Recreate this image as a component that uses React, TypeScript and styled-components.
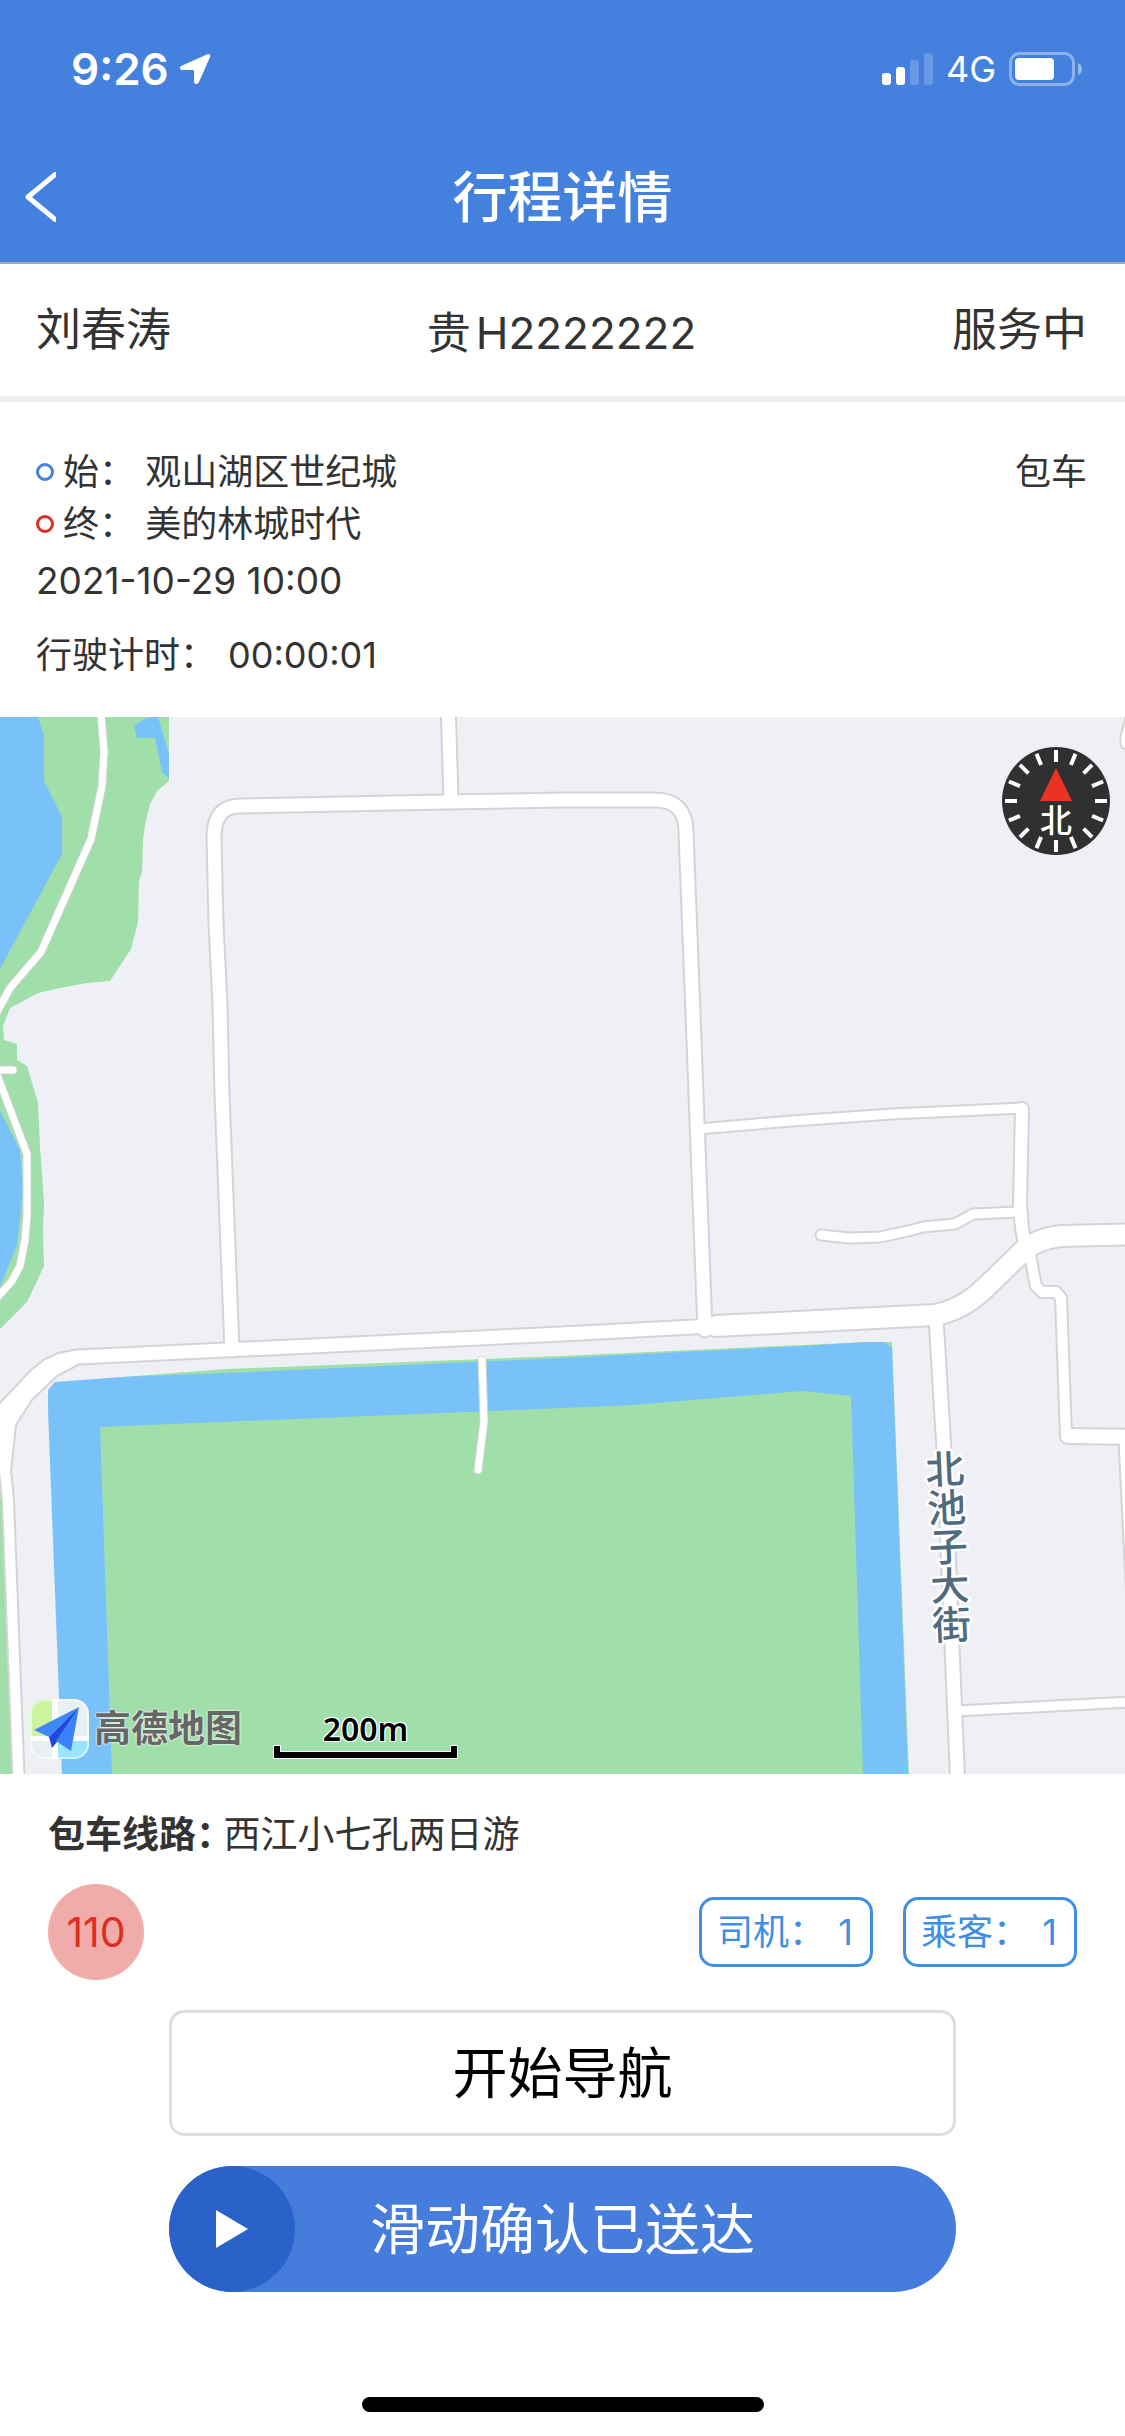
import React, { useState } from 'react';
import styled, { createGlobalStyle } from 'styled-components';

const GlobalStyle = createGlobalStyle`
  *, *::before, *::after { box-sizing: border-box; }
  body {
    margin: 0;
    background: #ffffff;
    color: #333333;
    font-family: Inter, "Noto Sans CJK SC", sans-serif;
  }
  button, input { font: inherit; }
`;

const Page = styled.div`
  display: flex;
  flex-direction: column;
  min-height: 100vh;
`;

const Header = styled.header`
  background: #4480de;
  border-bottom: 2px solid #a8a8ab;
  color: #ffffff;
`;

const StatusBar = styled.div`
  display: flex;
  align-items: center;
  justify-content: space-between;
  height: 132px;
  padding: 6px 42px 0 71px;
`;

const StatusGroup = styled.div<{ $gap: number }>`
  display: flex;
  align-items: center;
  gap: ${(p) => p.$gap}px;
`;

const Clock = styled.span`
  font-size: 44px;
  font-weight: 600;
  line-height: 48px;
`;

const Network = styled.span`
  font-size: 36px;
  line-height: 48px;
`;

const NavBar = styled.div`
  display: grid;
  grid-template-columns: 120px 1fr 120px;
  align-items: center;
  height: 130px;
`;

const BackButton = styled.button`
  display: flex;
  align-items: center;
  height: 96px;
  padding: 0 0 0 24px;
  border: 0;
  background: none;
  color: inherit;
`;

const Title = styled.h1`
  margin: 0;
  font-size: 55px;
  font-weight: 500;
  line-height: 72px;
  text-align: center;
`;

const Summary = styled.section`
  display: grid;
  grid-template-columns: 1fr auto 1fr;
  align-items: center;
  height: 138px;
  padding: 0 38px 0 36px;
  border-bottom: 6px solid #f0f0f0;
  font-size: 45px;
  line-height: 60px;
`;

const Plate = styled.span`
  display: flex;
  gap: 5px;
  padding-top: 6px;
  font-size: 44px;
`;

const Status = styled.span`
  text-align: right;
`;

const Details = styled.section`
  display: flex;
  justify-content: space-between;
  padding: 44px 38px 36px 36px;
  font-size: 36px;
  line-height: 52px;
`;

const DetailList = styled.div`
  display: flex;
  flex-direction: column;
`;

const Stop = styled.div<{ $color: string }>`
  display: flex;
  align-items: center;
  gap: 9px;
  &::before {
    content: '';
    width: 18px;
    height: 18px;
    border: 3px solid ${(p) => p.$color};
    border-radius: 50%;
  }
`;

const Moment = styled.time`
  margin-top: 5px;
  font-size: 37px;
`;

const Timer = styled.div`
  display: flex;
  gap: 12px;
  margin-top: 22px;
`;

const MapArea = styled.section`
  position: relative;
  flex: 1 0 600px;
  overflow: hidden;
  background: #eef0f5;
`;

const MapCanvas = styled.svg`
  position: absolute;
  inset: 0;
  width: 100%;
  height: 100%;
`;

const StreetName = styled.text`
  font-family: "Noto Sans CJK SC", sans-serif;
  font-size: 39px;
  font-weight: 500;
  writing-mode: vertical-rl;
  fill: #4f6b7d;
  stroke: #ffffff;
  stroke-width: 5px;
  stroke-linejoin: round;
  paint-order: stroke;
`;

const Compass = styled.button`
  position: absolute;
  top: 30px;
  right: 15px;
  padding: 0;
  border: 0;
  border-radius: 50%;
  background: none;
  svg { display: block; }
`;

const CompassLabel = styled.text`
  font-family: "Noto Sans CJK SC", sans-serif;
  font-size: 32px;
  font-weight: 500;
  fill: #ffffff;
`;

const MapFooter = styled.div`
  position: absolute;
  left: 30px;
  bottom: 15px;
  display: flex;
  align-items: flex-end;
  gap: 31px;
`;

const Brand = styled.div`
  display: flex;
  align-items: center;
  gap: 5px;
  color: #666666;
  font-size: 37px;
  font-weight: 700;
  line-height: 60px;
  text-shadow: 0 0 2px #ffffff, 0 0 2px #ffffff;
`;

const Scale = styled.div`
  display: flex;
  flex-direction: column;
  align-items: center;
  width: 185px;
  color: #000000;
  font-family: "Noto Sans", sans-serif;
  font-size: 32px;
  font-weight: 600;
  line-height: 32px;
  text-shadow: 1px 1px 0 #ffffff, -1px -1px 0 #ffffff, 1px -1px 0 #ffffff, -1px 1px 0 #ffffff;
`;

const Trip = styled.section`
  padding: 35px 48px 30px;
`;

const Route = styled.div`
  display: flex;
  gap: 9px;
  font-size: 37px;
  line-height: 52px;
`;

const RouteLabel = styled.span`
  font-weight: 700;
  font-feature-settings: "halt";
`;

const TripActions = styled.div`
  display: flex;
  align-items: center;
  gap: 30px;
  margin-top: 23px;
`;

const Emergency = styled.button`
  width: 96px;
  height: 96px;
  margin-right: auto;
  padding: 0;
  border: 0;
  border-radius: 50%;
  background: #efacab;
  color: #df2e20;
  font-size: 41px;
`;

const CountButton = styled.button`
  display: flex;
  align-items: center;
  justify-content: space-between;
  min-width: 174px;
  height: 70px;
  padding: 0 17px 0 15px;
  border: 3px solid #3f8ee6;
  border-radius: 15px;
  background: #ffffff;
  color: #3f8ee6;
  font-size: 36px;
  line-height: 52px;
`;

const Actions = styled.section`
  display: flex;
  flex-direction: column;
  gap: 30px;
  width: 70%;
  margin: 0 auto;
  font-size: 55px;
  line-height: 72px;
`;

const NavigateButton = styled.button`
  height: 126px;
  border: 3px solid #dddddd;
  border-radius: 15px;
  background: #ffffff;
  color: #000000;
`;

const Slide = styled.label`
  display: grid;
  align-items: center;
  height: 126px;
  overflow: hidden;
  border-radius: 63px;
  background: #467ddc;
  color: #ffffff;
  > * { grid-area: 1 / 1; }
`;

const SlideText = styled.span`
  text-align: center;
`;

const SlideRail = styled.span`
  display: block;
  padding-right: 126px;
`;

const SlideKnob = styled.span`
  display: flex;
  align-items: center;
  justify-content: center;
  width: 126px;
  height: 126px;
  border-radius: 50%;
  background: #2a62c9;
`;

const SlideInput = styled.input`
  width: 100%;
  height: 126px;
  margin: 0;
  opacity: 0;
`;

const HomeBar = styled.div`
  width: 402px;
  height: 15px;
  margin: 105px auto 24px;
  border-radius: 8px;
  background: #000000;
`;

type Road = { d: string; width: number; edge: number };

const roads: Road[] = [
  { d: 'M448 700L451 801', width: 13, edge: 17 },
  { d: 'M232 1350L222 1094L220 1005L216 924L214 837Q214 806 240 806L444 802L562 800H655Q686 800 686 832L694 1040L697 1121L705 1330', width: 13, edge: 17 },
  { d: 'M698 1129L792 1121L892 1114L1023 1108', width: 9, edge: 13 },
  { d: 'M1022 1109L1020 1205L1022 1228L1026 1250', width: 12, edge: 16 },
  { d: 'M821 1235L849 1238L880 1237L908 1231L923 1227L955 1224L973 1214L1020 1212', width: 9, edge: 13 },
  { d: 'M1028 1245L1036 1286L1042 1292H1056L1061 1298L1066 1436', width: 10, edge: 14 },
  { d: 'M1068 1436L1150 1437', width: 14, edge: 18 },
  { d: 'M1124 1440L1132 1600', width: 9, edge: 13 },
  { d: 'M936 1318L944 1450L952 1647L958 1790', width: 13, edge: 17 },
  { d: 'M956 1711L1150 1701', width: 9, edge: 13 },
  { d: 'M-12 1440L28 1388Q44 1362 78 1357L562 1334L712 1326', width: 13, edge: 17 },
  { d: 'M4 1410L5 1470L8 1500L19 1790', width: 10, edge: 14 },
  { d: 'M716 1326L935 1315Q962 1310 985 1288L1019 1255Q1034 1239 1061 1236L1150 1234', width: 20, edge: 24 },
  { d: 'M1130 718L1125 737L1125 744L1132 748', width: 7, edge: 11 },
];

const paths: string[] = [
  'M100 700L104 752L102 786L91 839L41 952L10 988L-4 1014',
  'M-10 1070H13',
  'M-4 1072L27 1154V1215L25 1240L20 1266L12 1281L-4 1299',
  'M482 1360L484 1421L478 1470',
];

function MapDrawing() {
  return (
    <MapCanvas viewBox="0 717 1125 1057" preserveAspectRatio="xMidYMid slice" role="img" aria-label="地图">
      <g fill="#a0dfaa">
        <path d="M0 717H169V781L157 791L150 804L145 825L143 840L142 871L139 881L138 922L131 949L110 981L87 983L60 988L38 993L10 1008L3 1026L4 1040L17 1044V1060L27 1066L38 1103L40 1147L44 1203L43 1230L44 1266L27 1302L0 1329Z" />
        <path d="M0 1494H3L13 1774H0Z" />
        <path d="M122 1377L227 1369L562 1356L803 1345L867 1342H892L909 1774H112L90 1400Z" />
      </g>
      <g fill="#78c2f9">
        <path d="M0 717H38L44 736V781L62 817V854L0 969Z" />
        <path d="M134 725L149 717H158L169 754V778L162 772L155 738H137Z" />
        <path d="M0 1111L20 1150L23 1190L17 1246L0 1286Z" />
        <path d="M48 1390L55 1382L122 1377L251 1372L562 1358L803 1346L867 1342H884L892 1348L908 1774H62L48 1410Z" />
      </g>
      <path fill="#a0dfaa" d="M100 1427L562 1408L634 1405L716 1398L803 1391L851 1396L863 1774H112Z" />
      <g fill="none" strokeLinejoin="round" strokeLinecap="round">
        {paths.map((d) => <path key={d} d={d} stroke="#cfd4d1" strokeWidth={9} />)}
        {roads.map((r) => <path key={r.d} d={r.d} stroke="#d3d4d6" strokeWidth={r.edge} />)}
      </g>
      <path fill="#ffffff" stroke="#d3d4d6" strokeWidth={2} d="M-5 1408L32 1369L45 1359L58 1353L74 1350L78 1365L57 1376L32 1400L16 1425L11 1472H-5Z" />
      <g fill="none" stroke="#ffffff" strokeLinejoin="round" strokeLinecap="round">
        {paths.map((d) => <path key={d} d={d} strokeWidth={7} />)}
        {roads.map((r) => <path key={r.d} d={r.d} strokeWidth={r.width} />)}
      </g>
      <StreetName x={944} y={1449} transform="rotate(-2.5 944 1449)">北池子大街</StreetName>
    </MapCanvas>
  );
}

function CompassDial() {
  const ticks = Array.from({ length: 16 }, (_, i) => i * 22.5);
  return (
    <svg width="108" height="108" viewBox="-54 -54 108 108">
      <circle r="54" fill="#303030" />
      {ticks.map((a) => (
        <path key={a} d="M0 -51V-39" stroke="#ffffff" strokeWidth={4} transform={`rotate(${a})`} />
      ))}
      <path d="M0 -33L16 0H-16Z" fill="#ea3323" />
      <CompassLabel x={0} y={31} textAnchor="middle">北</CompassLabel>
    </svg>
  );
}

function BrandMark() {
  return (
    <svg width="59" height="60" viewBox="0 0 59 60">
      <defs>
        <clipPath id="mark"><rect width="59" height="60" rx="15" /></clipPath>
      </defs>
      <g clipPath="url(#mark)">
        <rect width="59" height="60" fill="#e9f0f3" />
        <path d="M0 0H22V37H0Z" fill="#cdf5a0" />
        <path d="M28 42H59V60H28Z" fill="#9ae3fc" />
        <path d="M22 0H28V60H22ZM0 37H59V42H0Z" fill="#ffffff" />
      </g>
      <rect x="1" y="1" width="57" height="58" rx="14" fill="none" stroke="#ffffff" strokeOpacity="0.5" strokeWidth="2" />
      <path d="M49 8L4 31L19 38Z" fill="#3f87f7" />
      <path d="M49 8L19 38L22 49L27 43Z" fill="#1f49dc" />
      <path d="M49 8L26 42L41 52Z" fill="#3b82f6" />
    </svg>
  );
}

export default function App() {
  const [progress, setProgress] = useState(0);

  return (
    <Page>
      <GlobalStyle />
      <Header>
        <StatusBar>
          <StatusGroup $gap={11}>
            <Clock>9:26</Clock>
            <svg width="31" height="31" viewBox="0 0 31 31" fill="#ffffff">
              <path d="M28 0Q31 0 30 3L19 28Q18 30 16 30Q14 30 14 28V17Q14 16 13 16H2Q0 16 0 14Q0 13 1 12Z" />
            </svg>
          </StatusGroup>
          <StatusGroup $gap={13}>
            <svg width="51" height="34" viewBox="0 0 51 34" fill="#ffffff">
              <rect x="0" y="21" width="9" height="12" rx="3" />
              <rect x="14" y="15" width="9" height="18" rx="3" />
              <rect x="28" y="8" width="9" height="25" rx="3" opacity="0.2" />
              <rect x="42" y="1" width="9" height="32" rx="3" opacity="0.2" />
            </svg>
            <Network>4G</Network>
            <svg width="74" height="34" viewBox="0 0 74 34">
              <rect x="1.5" y="1.5" width="63" height="31" rx="9" fill="none" stroke="#ffffff" strokeOpacity="0.4" strokeWidth="3" />
              <rect x="6" y="6" width="39" height="22" rx="4" fill="#ffffff" />
              <path d="M69 11Q73 13 73 17T69 23Z" fill="#ffffff" opacity="0.45" />
            </svg>
          </StatusGroup>
        </StatusBar>
        <NavBar>
          <BackButton aria-label="返回">
            <svg width="32" height="50" viewBox="0 0 32 50" fill="none" stroke="#ffffff" strokeWidth="5" strokeLinejoin="round">
              <path d="M33 1L4 25L33 49" />
            </svg>
          </BackButton>
          <Title>行程详情</Title>
        </NavBar>
      </Header>

      <Summary>
        <span>刘春涛</span>
        <Plate><span>贵</span><span>H2222222</span></Plate>
        <Status>服务中</Status>
      </Summary>

      <Details>
        <DetailList>
          <Stop $color="#467fdd">始： 观山湖区世纪城</Stop>
          <Stop $color="#dc2f27">终： 美的林城时代</Stop>
          <Moment dateTime="2021-10-29T10:00">2021-10-29 10:00</Moment>
          <Timer><span>行驶计时：</span><span>00:00:01</span></Timer>
        </DetailList>
        <span>包车</span>
      </Details>

      <MapArea>
        <MapDrawing />
        <Compass aria-label="指北针"><CompassDial /></Compass>
        <MapFooter>
          <Brand><BrandMark />高德地图</Brand>
          <Scale>
            200m
            <svg width="185" height="14" viewBox="0 0 185 14">
              <path d="M0 0H8V6H177V0H185V14H0Z" fill="#ffffff" />
              <path d="M1 1H7V7H178V1H184V13H1Z" fill="#000000" />
            </svg>
          </Scale>
        </MapFooter>
      </MapArea>

      <Trip>
        <Route><RouteLabel>包车线路：</RouteLabel><span>西江小七孔两日游</span></Route>
        <TripActions>
          <Emergency>110</Emergency>
          <CountButton><span>司机：</span><span>1</span></CountButton>
          <CountButton><span>乘客：</span><span>1</span></CountButton>
        </TripActions>
      </Trip>

      <Actions>
        <NavigateButton>开始导航</NavigateButton>
        <Slide>
          <SlideText>滑动确认已送达</SlideText>
          <SlideRail>
            <SlideKnob style={{ marginLeft: `${progress}%` }}>
              <svg width="34" height="38" viewBox="0 0 34 38">
                <path d="M1 0L33 19L1 38Z" fill="#ffffff" />
              </svg>
            </SlideKnob>
          </SlideRail>
          <SlideInput
            type="range"
            min={0}
            max={100}
            value={progress}
            onChange={(e) => setProgress(Number(e.target.value))}
          />
        </Slide>
      </Actions>
      <HomeBar />
    </Page>
  );
}
